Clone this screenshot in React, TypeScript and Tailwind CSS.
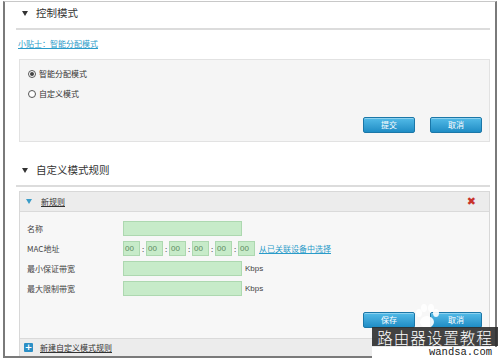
import React from 'react';

const cjk = "font-['Noto_Sans_CJK_SC','Noto_Sans',sans-serif]";

const BlueButton = ({ label }: { label: string }) => (
  <button className="w-[52px] h-[16px] rounded-[2px] border border-[#1b77a8] bg-gradient-to-b from-[#52bbe8] to-[#1e8dc5] text-white text-[8px] leading-none shadow-[inset_0_1px_0_rgba(255,255,255,0.35)]">
    {label}
  </button>
);

const GreenInput = ({ className = '' }: { className?: string }) => (
  <div className={`h-[15px] bg-[#c7ebc9] border border-[#add8b0] ${className}`} />
);

const Triangle = ({ color = '#333' }: { color?: string }) => (
  <svg width="6" height="5" viewBox="0 0 6 5" className="shrink-0">
    <path d="M0 0 L6 0 L3 5 Z" fill={color} />
  </svg>
);

const SectionHeader = ({ title, top }: { title: string; top: string }) => (
  <div className={`${top} pb-[4px] border-b-2 border-[#dcdcdc]`}>
    <div className="h-[22px] flex items-center pl-[6px]">
      <Triangle />
      <span className="ml-[8px] text-[10.5px] text-[#333] leading-none">{title}</span>
    </div>
  </div>
);

const MacBox = () => (
  <div className="w-[17px] h-[15px] bg-[#c7ebc9] border border-[#add8b0] flex items-center pl-[1px] text-[8px] text-[#5d8a62] font-['Liberation_Sans',sans-serif] leading-none">
    00
  </div>
);

const FormRow = ({ label, children }: { label: string; children: React.ReactNode }) => (
  <div className="flex items-center h-[15px]">
    <div className="w-[103px] pl-[7px] text-[8px] text-[#444] leading-none">{label}</div>
    {children}
  </div>
);

const Paw = () => (
  <svg width="30" height="30" viewBox="0 0 30 30" className="opacity-90">
    <ellipse cx="15" cy="20" rx="7" ry="6" fill="#fff" />
    <ellipse cx="7" cy="11" rx="3" ry="4" fill="#fff" />
    <ellipse cx="12" cy="6" rx="3" ry="4" fill="#fff" />
    <ellipse cx="19" cy="6" rx="3" ry="4" fill="#fff" />
    <ellipse cx="24" cy="11" rx="3" ry="4" fill="#fff" />
  </svg>
);

export default function App() {
  return (
    <div className={`w-[500px] h-[362px] bg-white pl-[3px] pt-[1px] relative overflow-hidden ${cjk}`}>
      <div className="w-[494px] h-[357px] border-x-2 border-b-2 border-t border-[#7a7a7a] border-t-[#c8c8c8] bg-white flex flex-col">
        <div className="ml-[11px] mr-[5px] flex-1 flex flex-col">
          <SectionHeader title="控制模式" top="mt-0" />

          <div className="mt-[9px] pl-[2px] h-[10px] flex items-center">
            <span className="text-[8px] leading-none text-[#2a9bc9] underline">小贴士：智能分配模式</span>
          </div>

          {/* mode panel */}
          <div className="mt-[10px] ml-[3px] h-[83px] bg-[#f5f5f5] border border-[#e2e2e2] flex flex-col pt-[8px] pl-[8px] pr-[7px]">
            <label className="flex items-center h-[12px] gap-[3px]">
              <span className="w-[8px] h-[8px] rounded-full border border-[#555] bg-white flex items-center justify-center">
                <span className="w-[4px] h-[4px] rounded-full bg-[#444]" />
              </span>
              <span className="text-[8px] leading-none text-[#333]">智能分配模式</span>
            </label>
            <label className="mt-[8px] flex items-center h-[12px] gap-[3px]">
              <span className="w-[8px] h-[8px] rounded-full border border-[#555] bg-white" />
              <span className="text-[8px] leading-none text-[#333]">自定义模式</span>
            </label>
            <div className="mt-[17px] flex justify-end gap-[15px]">
              <BlueButton label="提交" />
              <BlueButton label="取消" />
            </div>
          </div>

          <SectionHeader title="自定义模式规则" top="mt-[17px]" />

          {/* rule box */}
          <div className="mt-[4px] ml-[3px] flex-1 flex flex-col border-x border-t border-[#d8d8d8]">
            <div className="h-[20px] bg-[#ececec] border-b border-[#dadada] flex items-center pl-[6px] pr-[13px]">
              <Triangle color="#3a9cc8" />
              <span className="ml-[9px] text-[8px] leading-none text-[#333] underline">新规则</span>
              <span className="ml-auto text-[11px] leading-none font-bold text-[#c8322c] font-['DejaVu_Sans',sans-serif]">✖</span>
            </div>

            <div className="flex-1 bg-[#f7f7f7] flex flex-col pt-[9px]">
              <div className="flex flex-col gap-[5px]">
                <FormRow label="名称">
                  <GreenInput className="w-[119px]" />
                </FormRow>
                <FormRow label="MAC地址">
                  <div className="flex items-center">
                    {[0, 1, 2, 3, 4, 5].map((i) => (
                      <div key={i} className="flex items-center">
                        {i > 0 && <span className="w-[6px] text-center text-[8px] text-[#555] leading-none">:</span>}
                        <MacBox />
                      </div>
                    ))}
                    <span className="ml-[4px] text-[8px] leading-none text-[#2a9bc9] underline">从已关联设备中选择</span>
                  </div>
                </FormRow>
                <FormRow label="最小保证带宽">
                  <GreenInput className="w-[119px]" />
                  <span className="ml-[3px] text-[8px] leading-none text-[#444] font-['Liberation_Sans',sans-serif]">Kbps</span>
                </FormRow>
                <FormRow label="最大限制带宽">
                  <GreenInput className="w-[119px]" />
                  <span className="ml-[3px] text-[8px] leading-none text-[#444] font-['Liberation_Sans',sans-serif]">Kbps</span>
                </FormRow>
              </div>
              <div className="mt-[16px] flex justify-end gap-[15px] pr-[7px]">
                <BlueButton label="保存" />
                <BlueButton label="取消" />
              </div>
            </div>

            <div className="h-[18px] bg-[#ececec] border-t border-[#dadada] flex items-center pl-[4px]">
              <span className="w-[9px] h-[9px] bg-[#2b8fc6] rounded-[1px] flex items-center justify-center text-white text-[9px] font-bold leading-none font-['DejaVu_Sans',sans-serif]">+</span>
              <span className="ml-[7px] text-[8px] leading-none text-[#333] underline">新建自定义模式规则</span>
            </div>
          </div>
        </div>
      </div>

      {/* watermark */}
      <div className="absolute left-[412px] top-[302px]">
        <Paw />
      </div>
      <div className="absolute left-[372px] top-[327px] w-[126px] h-[19px] bg-[#2e2e2e]/90 flex items-center justify-center overflow-hidden">
        <span className="text-[15.5px] leading-[16px] text-white font-light tracking-[1px]">路由器设置教程</span>
      </div>
      <div className="absolute left-[372px] top-[347px] w-[126px] h-[11px] bg-white flex items-center justify-end pr-[6px]">
        <span className="text-[10.5px] leading-none text-[#222] font-['Liberation_Mono',monospace]">wandsa.com</span>
      </div>
    </div>
  );
}
